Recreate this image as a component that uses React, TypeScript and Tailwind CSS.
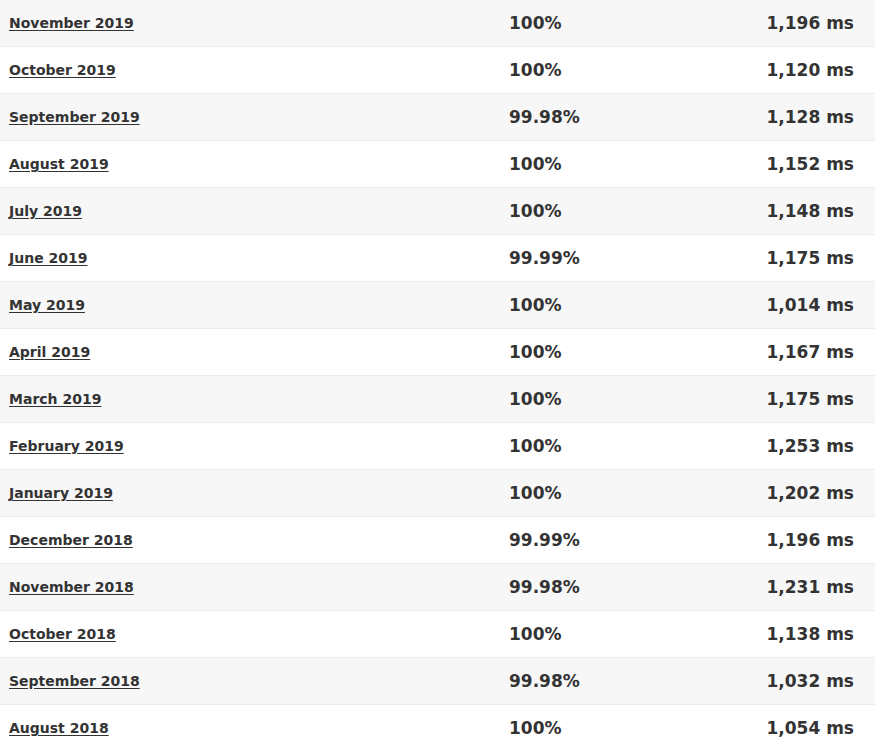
const rows: [string, string, string][] = [
  ['November 2019', '100%', '1,196 ms'],
  ['October 2019', '100%', '1,120 ms'],
  ['September 2019', '99.98%', '1,128 ms'],
  ['August 2019', '100%', '1,152 ms'],
  ['July 2019', '100%', '1,148 ms'],
  ['June 2019', '99.99%', '1,175 ms'],
  ['May 2019', '100%', '1,014 ms'],
  ['April 2019', '100%', '1,167 ms'],
  ['March 2019', '100%', '1,175 ms'],
  ['February 2019', '100%', '1,253 ms'],
  ['January 2019', '100%', '1,202 ms'],
  ['December 2018', '99.99%', '1,196 ms'],
  ['November 2018', '99.98%', '1,231 ms'],
  ['October 2018', '100%', '1,138 ms'],
  ['September 2018', '99.98%', '1,032 ms'],
  ['August 2018', '100%', '1,054 ms'],
];

export default function App() {
  return (
    <div className="w-[875px] bg-white text-[#333] font-bold" style={{ fontFamily: '"DejaVu Sans", Verdana, sans-serif' }}>
      {rows.map(([month, uptime, ms], i) => (
        <div
          key={month}
          className={`flex h-[47px] items-center pt-[1px] border-b border-[#ececec] ${i % 2 === 0 ? 'bg-[#f7f7f7]' : 'bg-white'}`}
        >
          <a href="#" className="w-[509px] pl-[9px] text-[14px] underline underline-offset-2">
            {month}
          </a>
          <span className="w-[160px] text-[17px]">{uptime}</span>
          <span className="flex-1 pr-[21px] text-right text-[17px]">{ms}</span>
        </div>
      ))}
    </div>
  );
}
